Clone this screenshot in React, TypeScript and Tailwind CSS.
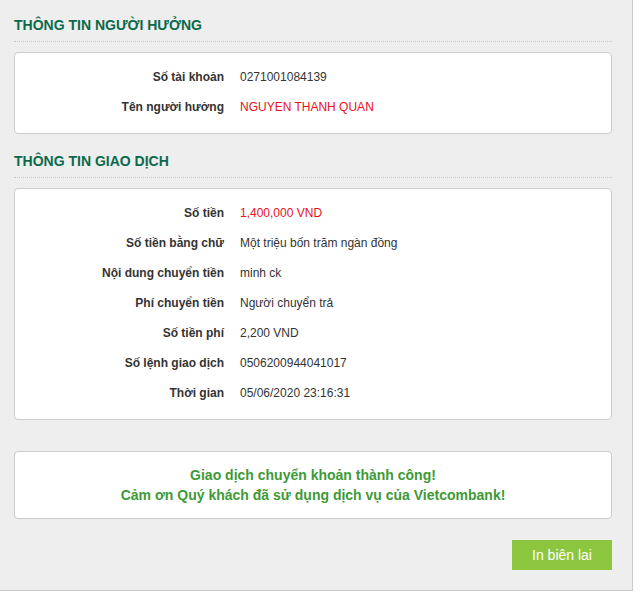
import React from "react";

type Row = { label: string; value: string; red?: boolean };

const beneficiary: Row[] = [
  { label: "Số tài khoản", value: "0271001084139" },
  { label: "Tên người hưởng", value: "NGUYEN THANH QUAN", red: true },
];

const transaction: Row[] = [
  { label: "Số tiền", value: "1,400,000 VND", red: true },
  { label: "Số tiền bằng chữ", value: "Một triệu bốn trăm ngàn đồng" },
  { label: "Nội dung chuyển tiền", value: "minh ck" },
  { label: "Phí chuyển tiền", value: "Người chuyển trả" },
  { label: "Số tiền phí", value: "2,200 VND" },
  { label: "Số lệnh giao dịch", value: "0506200944041017" },
  { label: "Thời gian", value: "05/06/2020 23:16:31" },
];

function SectionTitle({ children }: { children: React.ReactNode }) {
  return (
    <h2 className="pt-[16px] pb-[7px] text-[14px] leading-[18px] font-bold uppercase text-[#0a6a4b] border-b border-dotted border-[#c9c9c9]">
      {children}
    </h2>
  );
}

function InfoCard({ rows }: { rows: Row[] }) {
  return (
    <div className="mt-[10px] bg-white border border-[#cccccc] rounded-[4px] pt-[9px] pb-[11px]">
      {rows.map((r) => (
        <div key={r.label} className="flex items-center h-[30px] text-[12px]">
          <div className="w-[209px] text-right font-bold text-[#333333]">{r.label}</div>
          <div className={`pl-[16px] ${r.red ? "text-[#e8101c]" : "text-[#333333]"}`}>{r.value}</div>
        </div>
      ))}
    </div>
  );
}

export default function App() {
  return (
    <div className="bg-white min-h-[602px]" style={{ fontFamily: '"Liberation Sans", Arial, sans-serif' }}>
      <div className="w-[633px] h-[591px] bg-[#eeeeee] border-r border-b border-[#cbcbcb] pl-[14px] pr-[20px]">
        <SectionTitle>Thông tin người hưởng</SectionTitle>
        <InfoCard rows={beneficiary} />

        <div className="mt-[2px]">
          <SectionTitle>Thông tin giao dịch</SectionTitle>
        </div>
        <InfoCard rows={transaction} />

        <div className="mt-[31px] bg-white border border-[#cccccc] rounded-[4px] py-[13px] text-center text-[14px] leading-[20px] font-bold text-[#3d9a35]">
          <p>Giao dịch chuyển khoản thành công!</p>
          <p>Cảm ơn Quý khách đã sử dụng dịch vụ của Vietcombank!</p>
        </div>

        <div className="mt-[21px] flex justify-end">
          <button className="w-[100px] h-[30px] bg-[#8cc63e] text-white text-[14px]">In biên lai</button>
        </div>
      </div>
    </div>
  );
}
